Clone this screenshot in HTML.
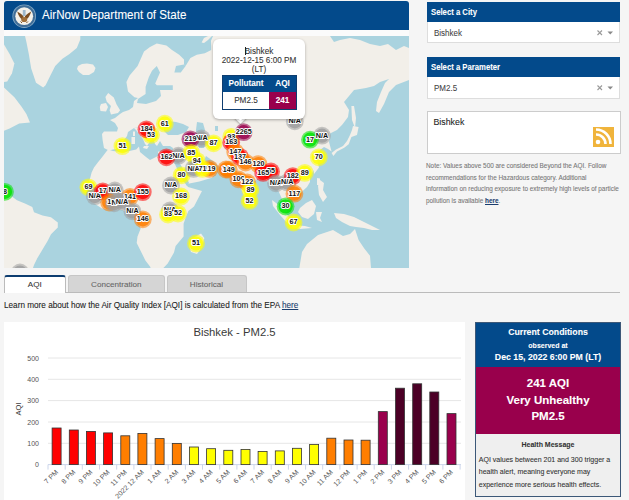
<!DOCTYPE html>
<html><head><meta charset="utf-8">
<style>
*{box-sizing:border-box;margin:0;padding:0}
html,body{width:629px;height:500px;overflow:hidden;background:#f5f5f5;font-family:"Liberation Sans",sans-serif;position:relative}
.abs{position:absolute}
.t{position:absolute;white-space:nowrap;line-height:1;-webkit-text-stroke:0.08px currentColor}
#hdr{left:4px;top:1px;width:405px;height:29px;background:#034a8b;border-radius:3px 3px 0 0}
.ph{background:#034a8b;color:#fff;font-weight:bold}
.sel{background:#fff;border:1px solid #ddd;border-top:none}
.ml{font:bold 7.2px "Liberation Sans",sans-serif;fill:#111;stroke:#fff;stroke-width:2px;paint-order:stroke;stroke-linejoin:round}
.yl{font:7px "Liberation Sans",sans-serif;fill:#555}
.xl{font:7px "Liberation Sans",sans-serif;fill:#555}
.at{font:7.6px "Liberation Sans",sans-serif;fill:#333}
.ct{font:11.3px "Liberation Sans",sans-serif;fill:#3a3a3a}
</style></head><body>
<div id="hdr" class="abs"></div>
<div class="abs" style="left:4px;top:29.5px;width:405px;height:6.5px;background:#fbfbfb"></div>
<svg class="abs" style="left:12px;top:3.5px" width="25" height="25" viewBox="0 0 25 25">
<circle cx="12.2" cy="12.2" r="11.8" fill="#7fa6c4"/>
<circle cx="12.2" cy="12.2" r="10.9" fill="#3f6d97"/>
<circle cx="12.2" cy="12.2" r="8.9" fill="#f4f1ea"/>
<path d="M11,16 Q7,14 5.2,7.5 Q8.5,9 11.5,12Z" fill="#7a4e22"/>
<path d="M13.4,16 Q17.4,14 19.2,7.5 Q15.9,9 12.9,12Z" fill="#7a4e22"/>
<rect x="10.8" y="6" width="2.8" height="6" fill="#9fb9cc"/>
<ellipse cx="12.2" cy="15.5" rx="3" ry="2.6" fill="#a0703a"/>
<path d="M8.5,17.5 L10,19 M15.9,17.5 L14.4,19" stroke="#7a4e22" stroke-width="1"/>
</svg>
<div class="t" style="left:42px;top:8.7px;font-size:12.3px;color:#fff;transform:scaleX(0.943);transform-origin:0 0">AirNow Department of State</div>
<svg class="abs" style="left:4px;top:36px" width="405" height="232" viewBox="4 36 405 232"><rect x="4" y="36" width="405" height="232" fill="#aad3df"/><path d="M25.0,36.0 L80.3,36.0 L80.3,39.6 L76.8,48.0 L69.5,54.0 L62.4,58.8 L55.2,66.0 L50.4,75.6 L45.6,85.2 L43.2,87.6 L36.0,82.8 L31.2,68.4 L28.8,54.0 L26.4,42.0Z" fill="#f2efe9" /><path d="M78.0,66.0 L82.0,64.0 L87.0,63.5 L93.0,64.5 L95.5,68.0 L94.0,72.0 L89.0,75.0 L83.0,75.0 L79.0,72.0 L77.0,69.0Z" fill="#f2efe9" /><path d="M4.0,44.4 L9.6,54.0 L14.4,63.6 L12.0,73.2 L7.2,81.6 L4.0,82.0Z" fill="#f2efe9" /><path d="M4.0,87.6 L14.4,97.2 L21.6,106.8 L26.4,114.0 L30.0,122.4 L19.2,123.6 L9.6,128.4 L4.0,130.8Z" fill="#f2efe9" /><path d="M4.0,193.0 L10.2,195.2 L17.0,200.3 L25.5,203.7 L32.3,207.1 L34.0,212.2 L42.5,215.6 L51.0,217.3 L57.8,222.4 L57.8,227.5 L51.0,234.3 L47.6,241.1 L42.5,249.6 L37.4,258.1 L34.0,265.0 L32.3,270.0 L4.0,270.0Z" fill="#f2efe9" /><path d="M108.2,93.0 L113.8,97.6 L116.6,104.6 L120.1,110.2 L118.0,113.0 L111.0,114.4 L109.6,110.2 L111.0,106.0 L106.8,101.8 L105.4,97.0Z" fill="#f2efe9" /><path d="M101.0,104.0 L106.0,103.0 L108.0,107.0 L106.0,111.6 L100.5,111.0 L99.8,107.0Z" fill="#f2efe9" /><path d="M109.0,150.5 L104.0,148.0 L102.6,140.0 L102.0,134.0 L104.0,131.5 L117.0,131.5 L118.0,128.0 L115.0,123.0 L110.0,120.0 L115.0,118.0 L120.0,114.0 L123.0,112.0 L129.0,110.0 L133.0,107.0 L134.0,101.0 L138.0,98.0 L134.4,97.2 L128.0,91.6 L126.4,82.0 L129.6,75.6 L137.6,66.0 L144.0,51.6 L150.0,47.0 L156.8,43.6 L166.4,45.5 L172.0,50.0 L179.2,54.8 L184.0,59.6 L184.0,64.4 L185.6,66.0 L190.4,58.0 L196.8,54.8 L204.8,53.2 L211.2,50.0 L211.0,40.7 L213.0,36.0 L330.0,36.0 L334.0,42.0 L340.0,40.0 L350.0,38.0 L360.0,40.0 L370.0,44.0 L380.0,46.0 L388.0,44.0 L396.0,50.0 L404.0,46.0 L409.0,48.0 L409.0,80.0 L396.0,85.0 L389.0,92.0 L384.0,104.0 L379.0,113.0 L376.0,111.0 L377.0,102.0 L381.0,92.0 L385.0,83.0 L389.0,79.0 L386.0,80.0 L380.0,82.0 L374.0,86.0 L366.0,88.0 L354.0,90.0 L344.0,102.0 L349.0,110.0 L348.0,117.0 L342.4,124.4 L337.0,130.0 L330.0,133.4 L329.0,142.0 L331.6,151.4 L328.0,149.0 L324.0,147.0 L320.0,150.0 L316.0,155.0 L319.0,167.6 L314.0,174.0 L313.5,170.0 L310.0,177.0 L310.0,182.0 L307.0,187.0 L300.0,193.5 L292.0,198.0 L288.0,201.0 L287.0,212.0 L283.0,212.0 L282.0,199.0 L278.0,190.0 L272.0,186.0 L266.0,180.0 L258.0,178.0 L252.0,184.0 L249.0,196.0 L247.0,205.0 L244.0,196.0 L240.0,186.0 L233.0,177.0 L226.0,173.0 L221.0,168.0 L217.0,165.0 L215.5,163.4 L217.3,170.6 L212.0,177.8 L199.4,181.4 L186.8,184.0 L183.0,178.0 L177.0,166.0 L172.0,154.0 L173.0,148.0 L170.0,146.0 L163.0,146.0 L160.0,141.0 L157.0,146.0 L155.0,144.0 L153.0,138.0 L147.0,131.0 L141.0,127.0 L134.0,128.0 L128.0,132.0 L127.0,136.0 L124.0,140.0 L121.0,146.0 L116.0,149.0 L113.0,149.5Z" fill="#f2efe9" /><path d="M141.0,127.0 L145.0,131.0 L149.0,135.0 L153.0,139.0 L151.0,140.0 L149.0,143.0 L147.0,146.0 L145.0,144.0 L143.0,139.0 L139.0,134.0 L136.0,130.0 L134.0,128.0Z" fill="#f2efe9" /><path d="M144.0,146.0 L149.0,146.0 L147.0,149.0 L143.0,148.0Z" fill="#f2efe9" /><path d="M131.5,137.0 L135.0,137.0 L135.0,144.0 L131.5,144.0Z" fill="#f2efe9" /><path d="M133.0,131.5 L135.0,131.5 L135.0,136.0 L133.0,136.0Z" fill="#f2efe9" /><path d="M158.0,151.5 L164.0,151.5 L164.0,153.5 L158.0,153.5Z" fill="#f2efe9" /><path d="M108.0,149.5 L113.0,151.0 L123.6,152.2 L136.2,149.4 L139.0,146.6 L140.0,152.0 L146.0,157.0 L150.0,160.0 L158.0,156.0 L170.0,154.0 L172.0,153.0 L176.0,165.0 L183.0,180.0 L188.0,187.0 L202.0,191.0 L194.0,206.5 L188.4,211.0 L185.5,218.0 L183.6,223.8 L183.6,236.6 L175.6,246.0 L174.0,252.5 L167.7,263.6 L163.0,268.4 L161.0,272.0 L152.0,272.0 L150.2,266.8 L145.4,260.4 L140.7,251.0 L136.7,243.0 L137.5,236.6 L140.7,228.6 L138.0,222.0 L134.0,216.4 L122.8,210.0 L102.0,208.4 L92.0,202.0 L88.0,190.4 L89.2,180.8 L90.4,177.2 L91.6,172.4 L94.0,167.6 L97.6,162.8 L102.4,156.8 L106.0,152.0Z" fill="#f2efe9" /><path d="M201.0,233.4 L204.3,238.0 L202.0,247.0 L197.0,254.0 L191.0,252.0 L189.0,245.0 L193.0,238.0Z" fill="#f2efe9" /><path d="M299.0,270.0 L302.0,252.0 L307.0,244.0 L318.0,235.0 L333.0,230.0 L343.0,236.0 L350.0,234.0 L355.0,229.0 L358.6,240.0 L364.3,248.6 L370.0,255.7 L371.0,268.0 L371.0,270.0Z" fill="#f2efe9" /><path d="M334.0,213.0 L344.0,214.0 L354.0,217.0 L364.0,222.0 L372.0,226.0 L380.0,230.0 L372.0,230.0 L364.0,228.0 L356.0,227.0 L350.0,226.0 L342.0,222.0 L336.0,218.0Z" fill="#f2efe9" /><path d="M300.0,208.0 L306.0,203.0 L312.0,200.0 L316.0,206.0 L314.0,214.0 L308.0,219.0 L302.0,217.0 L298.0,212.0Z" fill="#f2efe9" /><path d="M272.0,200.0 L280.0,206.0 L288.0,216.0 L292.0,222.0 L288.0,224.0 L280.0,215.0 L273.0,206.0Z" fill="#f2efe9" /><path d="M292.0,225.0 L305.0,226.0 L312.0,228.0 L300.0,229.0 L292.0,227.0Z" fill="#f2efe9" /><path d="M316.0,212.0 L322.0,212.0 L320.0,218.0 L322.0,222.0 L317.0,220.0Z" fill="#f2efe9" /><path d="M320.0,180.0 L324.0,183.0 L323.0,190.0 L327.0,197.0 L323.0,202.0 L319.0,195.0 L318.0,186.0Z" fill="#f2efe9" /><path d="M353.0,126.0 L358.6,127.0 L357.0,135.0 L351.4,137.0 L348.7,144.2 L344.2,147.8 L337.0,151.4 L333.4,156.0 L331.6,153.0 L336.0,149.5 L343.0,146.0 L347.0,141.0 L350.0,135.0 L352.0,130.0Z" fill="#f2efe9" /><path d="M351.4,106.0 L354.0,106.0 L356.0,118.0 L355.0,128.0 L352.0,120.0Z" fill="#f2efe9" /><path d="M317.0,178.0 L320.0,178.5 L320.0,185.0 L317.0,185.0Z" fill="#f2efe9" /><path d="M252.0,200.0 L255.0,202.0 L254.0,207.0 L251.0,205.0Z" fill="#f2efe9" /><path d="M201.6,42.4 L204.0,38.0 L208.0,36.0 L212.0,36.0 L208.0,40.0 L204.0,43.0Z" fill="#f2efe9" /><path d="M137.0,103.0 L146.0,104.0 L156.0,101.0 L161.0,96.0 L160.0,90.0 L172.8,90.0 L172.8,85.2 L156.8,85.2 L155.2,83.6 L160.0,72.4 L156.8,66.0 L152.0,70.8 L148.8,77.2 L145.6,86.8 L145.6,94.0 L141.0,97.0 L138.0,99.0Z" fill="#aad3df" /><path d="M176.0,66.0 L184.0,64.4 L185.6,66.0 L180.8,72.4 L174.4,72.4Z" fill="#aad3df" /><path d="M163.0,124.0 L168.0,121.0 L176.0,122.0 L183.0,124.0 L189.0,127.0 L186.0,132.0 L178.0,135.0 L168.0,135.0 L164.0,131.0Z" fill="#aad3df" /><path d="M197.0,122.0 L203.0,123.0 L205.0,130.0 L203.0,136.0 L206.0,142.0 L204.0,148.0 L199.0,148.0 L197.0,141.0 L196.0,130.0Z" fill="#aad3df" /><path d="M172.0,154.0 L175.0,155.0 L183.0,169.0 L189.0,183.0 L187.0,186.0 L181.0,177.0 L173.0,160.0Z" fill="#aad3df" /><path d="M206.0,156.0 L213.0,161.0 L218.0,166.0 L215.0,168.0 L209.0,165.0 L204.0,160.0Z" fill="#aad3df" /><path d="M215.0,126.0 L218.0,126.0 L218.0,131.0 L215.0,131.0Z" fill="#aad3df" /><circle cx="5" cy="191.8" r="8.9" fill="#00e400" fill-opacity="0.55"/><circle cx="5" cy="191.8" r="7.1" fill="#00e400" fill-opacity="0.8"/><circle cx="20" cy="272.5" r="8.9" fill="#9e9e9e" fill-opacity="0.55"/><circle cx="20" cy="272.5" r="7.1" fill="#9e9e9e" fill-opacity="0.8"/><circle cx="122.4" cy="146.1" r="8.9" fill="#ffff00" fill-opacity="0.55"/><circle cx="122.4" cy="146.1" r="7.1" fill="#ffff00" fill-opacity="0.8"/><circle cx="151" cy="134.9" r="8.9" fill="#ffff00" fill-opacity="0.55"/><circle cx="151" cy="134.9" r="7.1" fill="#ffff00" fill-opacity="0.8"/><circle cx="146.4" cy="129.3" r="8.9" fill="#ff0000" fill-opacity="0.55"/><circle cx="146.4" cy="129.3" r="7.1" fill="#ff0000" fill-opacity="0.8"/><circle cx="164.8" cy="123.7" r="8.9" fill="#ffff00" fill-opacity="0.55"/><circle cx="164.8" cy="123.7" r="7.1" fill="#ffff00" fill-opacity="0.8"/><circle cx="88.4" cy="187.3" r="8.9" fill="#ffff00" fill-opacity="0.55"/><circle cx="88.4" cy="187.3" r="7.1" fill="#ffff00" fill-opacity="0.8"/><circle cx="94.8" cy="196.1" r="8.9" fill="#9e9e9e" fill-opacity="0.55"/><circle cx="94.8" cy="196.1" r="7.1" fill="#9e9e9e" fill-opacity="0.8"/><circle cx="102.8" cy="191.3" r="8.9" fill="#ff0000" fill-opacity="0.55"/><circle cx="102.8" cy="191.3" r="7.1" fill="#ff0000" fill-opacity="0.8"/><circle cx="114.8" cy="190.5" r="8.9" fill="#9e9e9e" fill-opacity="0.55"/><circle cx="114.8" cy="190.5" r="7.1" fill="#9e9e9e" fill-opacity="0.8"/><circle cx="109.2" cy="202.5" r="8.9" fill="#ff7e00" fill-opacity="0.55"/><circle cx="109.2" cy="202.5" r="7.1" fill="#ff7e00" fill-opacity="0.8"/><circle cx="114" cy="203.3" r="8.9" fill="#9e9e9e" fill-opacity="0.55"/><circle cx="114" cy="203.3" r="7.1" fill="#9e9e9e" fill-opacity="0.8"/><circle cx="130" cy="196.9" r="8.9" fill="#ff7e00" fill-opacity="0.55"/><circle cx="130" cy="196.9" r="7.1" fill="#ff7e00" fill-opacity="0.8"/><circle cx="122" cy="201.7" r="8.9" fill="#9e9e9e" fill-opacity="0.55"/><circle cx="122" cy="201.7" r="7.1" fill="#9e9e9e" fill-opacity="0.8"/><circle cx="142.8" cy="192.1" r="8.9" fill="#ff0000" fill-opacity="0.55"/><circle cx="142.8" cy="192.1" r="7.1" fill="#ff0000" fill-opacity="0.8"/><circle cx="132.4" cy="211.3" r="8.9" fill="#9e9e9e" fill-opacity="0.55"/><circle cx="132.4" cy="211.3" r="7.1" fill="#9e9e9e" fill-opacity="0.8"/><circle cx="142.8" cy="219.3" r="8.9" fill="#ff7e00" fill-opacity="0.55"/><circle cx="142.8" cy="219.3" r="7.1" fill="#ff7e00" fill-opacity="0.8"/><circle cx="201.6" cy="138.5" r="8.9" fill="#9e9e9e" fill-opacity="0.55"/><circle cx="201.6" cy="138.5" r="7.1" fill="#9e9e9e" fill-opacity="0.8"/><circle cx="190.4" cy="139.3" r="8.9" fill="#99004c" fill-opacity="0.55"/><circle cx="190.4" cy="139.3" r="7.1" fill="#99004c" fill-opacity="0.8"/><circle cx="213.6" cy="143.3" r="8.9" fill="#ffff00" fill-opacity="0.55"/><circle cx="213.6" cy="143.3" r="7.1" fill="#ffff00" fill-opacity="0.8"/><circle cx="178.4" cy="155.7" r="8.9" fill="#9e9e9e" fill-opacity="0.55"/><circle cx="178.4" cy="155.7" r="7.1" fill="#9e9e9e" fill-opacity="0.8"/><circle cx="166.4" cy="157.3" r="8.9" fill="#ff0000" fill-opacity="0.55"/><circle cx="166.4" cy="157.3" r="7.1" fill="#ff0000" fill-opacity="0.8"/><circle cx="191.2" cy="152.9" r="8.9" fill="#ffff00" fill-opacity="0.55"/><circle cx="191.2" cy="152.9" r="7.1" fill="#ffff00" fill-opacity="0.8"/><circle cx="196.8" cy="160.9" r="8.9" fill="#ffff00" fill-opacity="0.55"/><circle cx="196.8" cy="160.9" r="7.1" fill="#ffff00" fill-opacity="0.8"/><circle cx="181.6" cy="175.3" r="8.9" fill="#ffff00" fill-opacity="0.55"/><circle cx="181.6" cy="175.3" r="7.1" fill="#ffff00" fill-opacity="0.8"/><circle cx="171" cy="185.5" r="8.9" fill="#9e9e9e" fill-opacity="0.55"/><circle cx="171" cy="185.5" r="7.1" fill="#9e9e9e" fill-opacity="0.8"/><circle cx="181" cy="196.5" r="8.9" fill="#ffff00" fill-opacity="0.55"/><circle cx="181" cy="196.5" r="7.1" fill="#ffff00" fill-opacity="0.8"/><circle cx="170" cy="210.5" r="8.9" fill="#9e9e9e" fill-opacity="0.55"/><circle cx="170" cy="210.5" r="7.1" fill="#9e9e9e" fill-opacity="0.8"/><circle cx="178" cy="213.5" r="8.9" fill="#ffff00" fill-opacity="0.55"/><circle cx="178" cy="213.5" r="7.1" fill="#ffff00" fill-opacity="0.8"/><circle cx="168" cy="214.5" r="8.9" fill="#ffff00" fill-opacity="0.55"/><circle cx="168" cy="214.5" r="7.1" fill="#ffff00" fill-opacity="0.8"/><circle cx="196" cy="243.5" r="8.9" fill="#ffff00" fill-opacity="0.55"/><circle cx="196" cy="243.5" r="7.1" fill="#ffff00" fill-opacity="0.8"/><circle cx="193.6" cy="168.9" r="8.9" fill="#9e9e9e" fill-opacity="0.55"/><circle cx="193.6" cy="168.9" r="7.1" fill="#9e9e9e" fill-opacity="0.8"/><circle cx="209.6" cy="168.9" r="8.9" fill="#ff7e00" fill-opacity="0.55"/><circle cx="209.6" cy="168.9" r="7.1" fill="#ff7e00" fill-opacity="0.8"/><circle cx="202.4" cy="168.9" r="8.9" fill="#ffff00" fill-opacity="0.55"/><circle cx="202.4" cy="168.9" r="7.1" fill="#ffff00" fill-opacity="0.8"/><circle cx="226" cy="169.5" r="8.9" fill="#ff7e00" fill-opacity="0.55"/><circle cx="226" cy="169.5" r="7.1" fill="#ff7e00" fill-opacity="0.8"/><circle cx="231.2" cy="136.9" r="8.9" fill="#ffff00" fill-opacity="0.55"/><circle cx="231.2" cy="136.9" r="7.1" fill="#ffff00" fill-opacity="0.8"/><circle cx="231.2" cy="142.5" r="8.9" fill="#ff0000" fill-opacity="0.55"/><circle cx="231.2" cy="142.5" r="7.1" fill="#ff0000" fill-opacity="0.8"/><circle cx="243.7" cy="132.2" r="8.9" fill="#99004c" fill-opacity="0.55"/><circle cx="243.7" cy="132.2" r="7.1" fill="#99004c" fill-opacity="0.8"/><circle cx="235.2" cy="152.1" r="8.9" fill="#ff7e00" fill-opacity="0.55"/><circle cx="235.2" cy="152.1" r="7.1" fill="#ff7e00" fill-opacity="0.8"/><circle cx="240" cy="156.9" r="8.9" fill="#ff0000" fill-opacity="0.55"/><circle cx="240" cy="156.9" r="7.1" fill="#ff0000" fill-opacity="0.8"/><circle cx="245.6" cy="162.5" r="8.9" fill="#ff7e00" fill-opacity="0.55"/><circle cx="245.6" cy="162.5" r="7.1" fill="#ff7e00" fill-opacity="0.8"/><circle cx="228.8" cy="169.7" r="8.9" fill="#ff7e00" fill-opacity="0.55"/><circle cx="228.8" cy="169.7" r="7.1" fill="#ff7e00" fill-opacity="0.8"/><circle cx="258.4" cy="164.1" r="8.9" fill="#ff7e00" fill-opacity="0.55"/><circle cx="258.4" cy="164.1" r="7.1" fill="#ff7e00" fill-opacity="0.8"/><circle cx="271" cy="171.5" r="8.9" fill="#ff0000" fill-opacity="0.55"/><circle cx="271" cy="171.5" r="7.1" fill="#ff0000" fill-opacity="0.8"/><circle cx="263.2" cy="172.9" r="8.9" fill="#ff0000" fill-opacity="0.55"/><circle cx="263.2" cy="172.9" r="7.1" fill="#ff0000" fill-opacity="0.8"/><circle cx="238.4" cy="179.3" r="8.9" fill="#ff7e00" fill-opacity="0.55"/><circle cx="238.4" cy="179.3" r="7.1" fill="#ff7e00" fill-opacity="0.8"/><circle cx="247.2" cy="182.5" r="8.9" fill="#ff7e00" fill-opacity="0.55"/><circle cx="247.2" cy="182.5" r="7.1" fill="#ff7e00" fill-opacity="0.8"/><circle cx="250.4" cy="189.7" r="8.9" fill="#ffff00" fill-opacity="0.55"/><circle cx="250.4" cy="189.7" r="7.1" fill="#ffff00" fill-opacity="0.8"/><circle cx="249.6" cy="200.9" r="8.9" fill="#ffff00" fill-opacity="0.55"/><circle cx="249.6" cy="200.9" r="7.1" fill="#ffff00" fill-opacity="0.8"/><circle cx="276" cy="183.3" r="8.9" fill="#9e9e9e" fill-opacity="0.55"/><circle cx="276" cy="183.3" r="7.1" fill="#9e9e9e" fill-opacity="0.8"/><circle cx="287.2" cy="182.5" r="8.9" fill="#9e9e9e" fill-opacity="0.55"/><circle cx="287.2" cy="182.5" r="7.1" fill="#9e9e9e" fill-opacity="0.8"/><circle cx="292.8" cy="176.1" r="8.9" fill="#ff0000" fill-opacity="0.55"/><circle cx="292.8" cy="176.1" r="7.1" fill="#ff0000" fill-opacity="0.8"/><circle cx="304.8" cy="172.9" r="8.9" fill="#ffff00" fill-opacity="0.55"/><circle cx="304.8" cy="172.9" r="7.1" fill="#ffff00" fill-opacity="0.8"/><circle cx="294.4" cy="193.7" r="8.9" fill="#ff7e00" fill-opacity="0.55"/><circle cx="294.4" cy="193.7" r="7.1" fill="#ff7e00" fill-opacity="0.8"/><circle cx="285.6" cy="206.5" r="8.9" fill="#00e400" fill-opacity="0.55"/><circle cx="285.6" cy="206.5" r="7.1" fill="#00e400" fill-opacity="0.8"/><circle cx="293.6" cy="222.5" r="8.9" fill="#ffff00" fill-opacity="0.55"/><circle cx="293.6" cy="222.5" r="7.1" fill="#ffff00" fill-opacity="0.8"/><circle cx="294.8" cy="121.3" r="8.9" fill="#9e9e9e" fill-opacity="0.55"/><circle cx="294.8" cy="121.3" r="7.1" fill="#9e9e9e" fill-opacity="0.8"/><circle cx="322" cy="135.7" r="8.9" fill="#9e9e9e" fill-opacity="0.55"/><circle cx="322" cy="135.7" r="7.1" fill="#9e9e9e" fill-opacity="0.8"/><circle cx="310" cy="139.7" r="8.9" fill="#00e400" fill-opacity="0.55"/><circle cx="310" cy="139.7" r="7.1" fill="#00e400" fill-opacity="0.8"/><circle cx="318.8" cy="157.3" r="8.9" fill="#ffff00" fill-opacity="0.55"/><circle cx="318.8" cy="157.3" r="7.1" fill="#ffff00" fill-opacity="0.8"/><text x="5" y="193.70000000000002" text-anchor="middle" class="ml">8</text><text x="122.4" y="148.0" text-anchor="middle" class="ml">51</text><text x="151" y="136.8" text-anchor="middle" class="ml">53</text><text x="146.4" y="131.20000000000002" text-anchor="middle" class="ml">184</text><text x="164.8" y="125.60000000000001" text-anchor="middle" class="ml">61</text><text x="88.4" y="189.20000000000002" text-anchor="middle" class="ml">69</text><text x="94.8" y="198.0" text-anchor="middle" class="ml">N/A</text><text x="102.8" y="193.20000000000002" text-anchor="middle" class="ml">17</text><text x="114.8" y="192.4" text-anchor="middle" class="ml">N/A</text><text x="109.2" y="204.4" text-anchor="middle" class="ml">1</text><text x="114" y="205.20000000000002" text-anchor="middle" class="ml">N</text><text x="130" y="198.8" text-anchor="middle" class="ml">141</text><text x="122" y="203.6" text-anchor="middle" class="ml">N/A</text><text x="142.8" y="194.0" text-anchor="middle" class="ml">155</text><text x="132.4" y="213.20000000000002" text-anchor="middle" class="ml">N/A</text><text x="142.8" y="221.20000000000002" text-anchor="middle" class="ml">146</text><text x="201.6" y="140.4" text-anchor="middle" class="ml">N/A</text><text x="190.4" y="141.20000000000002" text-anchor="middle" class="ml">219</text><text x="213.6" y="145.20000000000002" text-anchor="middle" class="ml">87</text><text x="178.4" y="157.6" text-anchor="middle" class="ml">N/A</text><text x="166.4" y="159.20000000000002" text-anchor="middle" class="ml">162</text><text x="191.2" y="154.8" text-anchor="middle" class="ml">85</text><text x="196.8" y="162.8" text-anchor="middle" class="ml">94</text><text x="181.6" y="177.20000000000002" text-anchor="middle" class="ml">80</text><text x="171" y="187.4" text-anchor="middle" class="ml">N/A</text><text x="181" y="198.4" text-anchor="middle" class="ml">168</text><text x="170" y="212.4" text-anchor="middle" class="ml">N/A</text><text x="178" y="215.4" text-anchor="middle" class="ml">52</text><text x="168" y="216.4" text-anchor="middle" class="ml">83</text><text x="196" y="245.4" text-anchor="middle" class="ml">51</text><text x="193.6" y="170.8" text-anchor="middle" class="ml">N/A</text><text x="209.6" y="170.8" text-anchor="middle" class="ml">119</text><text x="202.4" y="170.8" text-anchor="middle" class="ml">71</text><text x="226" y="171.4" text-anchor="middle" class="ml">14</text><text x="231.2" y="138.8" text-anchor="middle" class="ml">93</text><text x="231.2" y="144.4" text-anchor="middle" class="ml">163</text><text x="243.7" y="134.1" text-anchor="middle" class="ml">2265</text><text x="235.2" y="154.0" text-anchor="middle" class="ml">147</text><text x="240" y="158.8" text-anchor="middle" class="ml">137</text><text x="245.6" y="164.4" text-anchor="middle" class="ml">146</text><text x="228.8" y="171.6" text-anchor="middle" class="ml">149</text><text x="258.4" y="166.0" text-anchor="middle" class="ml">120</text><text x="271" y="173.4" text-anchor="middle" class="ml">55</text><text x="263.2" y="174.8" text-anchor="middle" class="ml">165</text><text x="238.4" y="181.20000000000002" text-anchor="middle" class="ml">106</text><text x="247.2" y="184.4" text-anchor="middle" class="ml">122</text><text x="250.4" y="191.6" text-anchor="middle" class="ml">89</text><text x="249.6" y="202.8" text-anchor="middle" class="ml">52</text><text x="276" y="185.20000000000002" text-anchor="middle" class="ml">N/A</text><text x="287.2" y="184.4" text-anchor="middle" class="ml">N/A</text><text x="292.8" y="178.0" text-anchor="middle" class="ml">182</text><text x="304.8" y="174.8" text-anchor="middle" class="ml">89</text><text x="294.4" y="195.6" text-anchor="middle" class="ml">117</text><text x="285.6" y="208.4" text-anchor="middle" class="ml">30</text><text x="293.6" y="224.4" text-anchor="middle" class="ml">67</text><text x="294.8" y="123.2" text-anchor="middle" class="ml">N/A</text><text x="322" y="137.6" text-anchor="middle" class="ml">N/A</text><text x="310" y="141.6" text-anchor="middle" class="ml">17</text><text x="318.8" y="159.20000000000002" text-anchor="middle" class="ml">70</text></svg>
<div class="abs" style="left:235.5px;top:113.1px;width:9px;height:9px;background:#fff;transform:rotate(45deg);box-shadow:1px 1px 2px rgba(0,0,0,.25)"></div>
<div class="abs" style="left:213px;top:39px;width:92px;height:80px;background:#fff;border-radius:6px;box-shadow:0 1px 3px rgba(0,0,0,.3)"></div>
<div class="abs" style="left:235.5px;top:110px;width:9px;height:9px;background:#fff;transform:rotate(45deg)"></div>
<div class="t" style="left:213px;top:46.5px;width:92px;text-align:center;font-size:8.2px;line-height:9.4px;color:#333">Bishkek<br>2022-12-15 6:00 PM<br>(LT)</div>
<div class="abs" style="left:244.6px;top:46.5px;width:0.9px;height:8px;background:#222"></div>
<div class="abs" style="left:221.5px;top:75px;width:75px;height:35px;border:1px solid #0d3d70;background:#fff"></div>
<div class="abs" style="left:222.5px;top:76px;width:73px;height:16px;background:#034a8b"></div>
<div class="abs" style="left:269px;top:92px;width:26.5px;height:17px;background:#99004c"></div>
<div class="t" style="left:222.5px;top:80px;width:47px;text-align:center;font-size:8.2px;font-weight:bold;color:#fff">Pollutant</div>
<div class="t" style="left:269px;top:80px;width:27px;text-align:center;font-size:8.2px;font-weight:bold;color:#fff">AQI</div>
<div class="t" style="left:222.5px;top:96.5px;width:47px;text-align:center;font-size:8.2px;color:#333">PM2.5</div>
<div class="t" style="left:269px;top:96.5px;width:27px;text-align:center;font-size:8.2px;font-weight:bold;color:#fff">241</div>

<div class="abs ph" style="left:427px;top:2px;width:193px;height:20px"></div>
<div class="t" style="left:430.7px;top:7.6px;font-size:8.9px;font-weight:bold;color:#fff;transform:scaleX(0.87);transform-origin:0 0">Select a City</div>
<div class="abs sel" style="left:427px;top:22px;width:193px;height:21px"></div>
<div class="t" style="left:433.5px;top:29.2px;font-size:8.6px;color:#444;transform:scaleX(0.93);transform-origin:0 0">Bishkek</div>
<div class="abs ph" style="left:427px;top:57px;width:193px;height:20px"></div>
<div class="t" style="left:430.7px;top:62.6px;font-size:8.9px;font-weight:bold;color:#fff;transform:scaleX(0.87);transform-origin:0 0">Select a Parameter</div>
<div class="abs sel" style="left:427px;top:77px;width:193px;height:22px"></div>
<div class="t" style="left:433.5px;top:84.2px;font-size:8.6px;color:#444;transform:scaleX(0.93);transform-origin:0 0">PM2.5</div>
<svg class="abs" style="left:596px;top:29px" width="20" height="8" viewBox="0 0 20 8"><path d="M1.5,1.5 L6,6 M6,1.5 L1.5,6" stroke="#999" stroke-width="1.1"/><path d="M11.5,2.5 L17,2.5 L14.25,5.5Z" fill="#888"/></svg>
<svg class="abs" style="left:596px;top:84px" width="20" height="8" viewBox="0 0 20 8"><path d="M1.5,1.5 L6,6 M6,1.5 L1.5,6" stroke="#999" stroke-width="1.1"/><path d="M11.5,2.5 L17,2.5 L14.25,5.5Z" fill="#888"/></svg>
<div class="abs" style="left:426.5px;top:111px;width:194.5px;height:42.6px;background:#fff;border:1px solid #ccc"></div>
<div class="t" style="left:433.5px;top:117.6px;font-size:8.8px;color:#222">Bishkek</div>
<svg class="abs" style="left:593px;top:126.5px" width="21" height="20" viewBox="0 0 21 20">
<rect width="21" height="20" fill="#f0b43c"/>
<circle cx="5" cy="15" r="2.3" fill="#fff"/>
<path d="M3,7.5 A9.5,9.5 0 0 1 12.5,17" stroke="#fff" stroke-width="2.6" fill="none"/>
<path d="M3,2.5 A14.5,14.5 0 0 1 17.5,17" stroke="#fff" stroke-width="2.6" fill="none"/>
</svg>
<div class="t" style="left:426px;top:160px;width:200px;white-space:normal;font-size:6.4px;line-height:11.5px;color:#777">Note: Values above 500 are considered Beyond the AQI. Follow<br>recommendations for the Hazardous category. Additional<br>information on reducing exposure to extremely high levels of particle<br>pollution is available <b style="color:#1a3d6e;text-decoration:underline">here</b>.</div>

<div class="abs" style="left:4px;top:291.5px;width:616px;height:1px;background:#bbb"></div>
<div class="abs" style="left:4px;top:275px;width:61.5px;height:17.5px;background:#fff;border:1px solid #bbb;border-top:2px solid #0d3d70;border-bottom:none;border-radius:3px 3px 0 0"></div>
<div class="t" style="left:4px;top:280.5px;width:61.5px;text-align:center;font-size:8.1px;color:#333">AQI</div>
<div class="abs" style="left:68px;top:275px;width:96.5px;height:16.5px;background:#d5d5d5;border:1px solid #c6c6c6;border-bottom:none;border-radius:3px 3px 0 0"></div>
<div class="t" style="left:68px;top:280.5px;width:96.5px;text-align:center;font-size:8.1px;color:#666">Concentration</div>
<div class="abs" style="left:166.5px;top:275px;width:80px;height:16.5px;background:#d5d5d5;border:1px solid #c6c6c6;border-bottom:none;border-radius:3px 3px 0 0"></div>
<div class="t" style="left:166.5px;top:280.5px;width:80px;text-align:center;font-size:8.1px;color:#666">Historical</div>
<div class="t" style="left:4px;top:301.5px;font-size:8.2px;color:#222">Learn more about how the Air Quality Index [AQI] is calculated from the EPA <span style="color:#1a3d6e;text-decoration:underline">here</span></div>

<div class="abs" style="left:4px;top:322px;width:460.5px;height:178px;background:#fff"></div>
<svg class="abs" style="left:0;top:0" width="629" height="500" viewBox="0 0 629 500"><line x1="48" y1="358" x2="461" y2="358" stroke="#e6e6e6" stroke-width="1"/><text x="39" y="360.5" text-anchor="end" class="yl">500</text><line x1="48" y1="379.3" x2="461" y2="379.3" stroke="#e6e6e6" stroke-width="1"/><text x="39" y="381.8" text-anchor="end" class="yl">400</text><line x1="48" y1="400.6" x2="461" y2="400.6" stroke="#e6e6e6" stroke-width="1"/><text x="39" y="403.1" text-anchor="end" class="yl">300</text><line x1="48" y1="422" x2="461" y2="422" stroke="#e6e6e6" stroke-width="1"/><text x="39" y="424.5" text-anchor="end" class="yl">200</text><line x1="48" y1="443.3" x2="461" y2="443.3" stroke="#e6e6e6" stroke-width="1"/><text x="39" y="445.8" text-anchor="end" class="yl">100</text><text x="39" y="467.1" text-anchor="end" class="yl">0</text><line x1="48" y1="464.6" x2="461" y2="464.6" stroke="#ccd6eb" stroke-width="1"/><line x1="48.0" y1="464.6" x2="48.0" y2="469.6" stroke="#ccd6eb" stroke-width="1"/><line x1="65.2" y1="464.6" x2="65.2" y2="469.6" stroke="#ccd6eb" stroke-width="1"/><line x1="82.3" y1="464.6" x2="82.3" y2="469.6" stroke="#ccd6eb" stroke-width="1"/><line x1="99.5" y1="464.6" x2="99.5" y2="469.6" stroke="#ccd6eb" stroke-width="1"/><line x1="116.7" y1="464.6" x2="116.7" y2="469.6" stroke="#ccd6eb" stroke-width="1"/><line x1="133.9" y1="464.6" x2="133.9" y2="469.6" stroke="#ccd6eb" stroke-width="1"/><line x1="151.0" y1="464.6" x2="151.0" y2="469.6" stroke="#ccd6eb" stroke-width="1"/><line x1="168.2" y1="464.6" x2="168.2" y2="469.6" stroke="#ccd6eb" stroke-width="1"/><line x1="185.4" y1="464.6" x2="185.4" y2="469.6" stroke="#ccd6eb" stroke-width="1"/><line x1="202.5" y1="464.6" x2="202.5" y2="469.6" stroke="#ccd6eb" stroke-width="1"/><line x1="219.7" y1="464.6" x2="219.7" y2="469.6" stroke="#ccd6eb" stroke-width="1"/><line x1="236.9" y1="464.6" x2="236.9" y2="469.6" stroke="#ccd6eb" stroke-width="1"/><line x1="254.0" y1="464.6" x2="254.0" y2="469.6" stroke="#ccd6eb" stroke-width="1"/><line x1="271.2" y1="464.6" x2="271.2" y2="469.6" stroke="#ccd6eb" stroke-width="1"/><line x1="288.4" y1="464.6" x2="288.4" y2="469.6" stroke="#ccd6eb" stroke-width="1"/><line x1="305.6" y1="464.6" x2="305.6" y2="469.6" stroke="#ccd6eb" stroke-width="1"/><line x1="322.7" y1="464.6" x2="322.7" y2="469.6" stroke="#ccd6eb" stroke-width="1"/><line x1="339.9" y1="464.6" x2="339.9" y2="469.6" stroke="#ccd6eb" stroke-width="1"/><line x1="357.1" y1="464.6" x2="357.1" y2="469.6" stroke="#ccd6eb" stroke-width="1"/><line x1="374.2" y1="464.6" x2="374.2" y2="469.6" stroke="#ccd6eb" stroke-width="1"/><line x1="391.4" y1="464.6" x2="391.4" y2="469.6" stroke="#ccd6eb" stroke-width="1"/><line x1="408.6" y1="464.6" x2="408.6" y2="469.6" stroke="#ccd6eb" stroke-width="1"/><line x1="425.7" y1="464.6" x2="425.7" y2="469.6" stroke="#ccd6eb" stroke-width="1"/><line x1="442.9" y1="464.6" x2="442.9" y2="469.6" stroke="#ccd6eb" stroke-width="1"/><line x1="460.1" y1="464.6" x2="460.1" y2="469.6" stroke="#ccd6eb" stroke-width="1"/><rect x="52.1" y="428.0" width="9" height="36.6" fill="#ff0000" stroke="#333" stroke-width="0.8"/><text transform="translate(58.6,472.6) rotate(-45)" text-anchor="end" class="xl">7 PM</text><rect x="69.3" y="430.0" width="9" height="34.6" fill="#ff0000" stroke="#333" stroke-width="0.8"/><text transform="translate(75.8,472.6) rotate(-45)" text-anchor="end" class="xl">8 PM</text><rect x="86.4" y="431.4" width="9" height="33.2" fill="#ff0000" stroke="#333" stroke-width="0.8"/><text transform="translate(92.9,472.6) rotate(-45)" text-anchor="end" class="xl">9 PM</text><rect x="103.6" y="432.9" width="9" height="31.7" fill="#ff0000" stroke="#333" stroke-width="0.8"/><text transform="translate(110.1,472.6) rotate(-45)" text-anchor="end" class="xl">10 PM</text><rect x="120.8" y="435.8" width="9" height="28.8" fill="#ff7e00" stroke="#333" stroke-width="0.8"/><text transform="translate(127.3,472.6) rotate(-45)" text-anchor="end" class="xl">11 PM</text><rect x="137.9" y="433.4" width="9" height="31.2" fill="#ff7e00" stroke="#333" stroke-width="0.8"/><text transform="translate(144.4,472.6) rotate(-45)" text-anchor="end" class="xl">2022 12 AM</text><rect x="155.1" y="438.6" width="9" height="26.0" fill="#ff7e00" stroke="#333" stroke-width="0.8"/><text transform="translate(161.6,472.6) rotate(-45)" text-anchor="end" class="xl">1 AM</text><rect x="172.3" y="443.4" width="9" height="21.2" fill="#ff7e00" stroke="#333" stroke-width="0.8"/><text transform="translate(178.8,472.6) rotate(-45)" text-anchor="end" class="xl">2 AM</text><rect x="189.4" y="447.0" width="9" height="17.6" fill="#ffff00" stroke="#333" stroke-width="0.8"/><text transform="translate(195.9,472.6) rotate(-45)" text-anchor="end" class="xl">3 AM</text><rect x="206.6" y="448.7" width="9" height="15.9" fill="#ffff00" stroke="#333" stroke-width="0.8"/><text transform="translate(213.1,472.6) rotate(-45)" text-anchor="end" class="xl">4 AM</text><rect x="223.8" y="450.3" width="9" height="14.3" fill="#ffff00" stroke="#333" stroke-width="0.8"/><text transform="translate(230.3,472.6) rotate(-45)" text-anchor="end" class="xl">5 AM</text><rect x="241.0" y="449.4" width="9" height="15.2" fill="#ffff00" stroke="#333" stroke-width="0.8"/><text transform="translate(247.5,472.6) rotate(-45)" text-anchor="end" class="xl">6 AM</text><rect x="258.1" y="451.4" width="9" height="13.2" fill="#ffff00" stroke="#333" stroke-width="0.8"/><text transform="translate(264.6,472.6) rotate(-45)" text-anchor="end" class="xl">7 AM</text><rect x="275.3" y="450.9" width="9" height="13.7" fill="#ffff00" stroke="#333" stroke-width="0.8"/><text transform="translate(281.8,472.6) rotate(-45)" text-anchor="end" class="xl">8 AM</text><rect x="292.5" y="448.3" width="9" height="16.3" fill="#ffff00" stroke="#333" stroke-width="0.8"/><text transform="translate(299.0,472.6) rotate(-45)" text-anchor="end" class="xl">9 AM</text><rect x="309.6" y="444.5" width="9" height="20.1" fill="#ffff00" stroke="#333" stroke-width="0.8"/><text transform="translate(316.1,472.6) rotate(-45)" text-anchor="end" class="xl">10 AM</text><rect x="326.8" y="438.2" width="9" height="26.4" fill="#ff7e00" stroke="#333" stroke-width="0.8"/><text transform="translate(333.3,472.6) rotate(-45)" text-anchor="end" class="xl">11 AM</text><rect x="344.0" y="440.0" width="9" height="24.6" fill="#ff7e00" stroke="#333" stroke-width="0.8"/><text transform="translate(350.5,472.6) rotate(-45)" text-anchor="end" class="xl">12 PM</text><rect x="361.1" y="440.2" width="9" height="24.4" fill="#ff7e00" stroke="#333" stroke-width="0.8"/><text transform="translate(367.6,472.6) rotate(-45)" text-anchor="end" class="xl">1 PM</text><rect x="378.3" y="411.6" width="9" height="53.0" fill="#99004c" stroke="#333" stroke-width="0.8"/><text transform="translate(384.8,472.6) rotate(-45)" text-anchor="end" class="xl">2 PM</text><rect x="395.5" y="388.2" width="9" height="76.4" fill="#4c0026" stroke="#333" stroke-width="0.8"/><text transform="translate(402.0,472.6) rotate(-45)" text-anchor="end" class="xl">3 PM</text><rect x="412.7" y="383.8" width="9" height="80.8" fill="#4c0026" stroke="#333" stroke-width="0.8"/><text transform="translate(419.2,472.6) rotate(-45)" text-anchor="end" class="xl">4 PM</text><rect x="429.8" y="392.0" width="9" height="72.6" fill="#4c0026" stroke="#333" stroke-width="0.8"/><text transform="translate(436.3,472.6) rotate(-45)" text-anchor="end" class="xl">5 PM</text><rect x="447.0" y="413.6" width="9" height="51.0" fill="#99004c" stroke="#333" stroke-width="0.8"/><text transform="translate(453.5,472.6) rotate(-45)" text-anchor="end" class="xl">6 PM</text><text transform="translate(21,409) rotate(-90)" text-anchor="middle" class="at">AQI</text><text x="234.5" y="336.4" text-anchor="middle" class="ct">Bishkek - PM2.5</text></svg>

<div class="abs" style="left:475px;top:321.5px;width:146px;height:175px;border:1px solid #3c5878;background:#efefef"></div>
<div class="abs" style="left:476px;top:322.5px;width:144px;height:44px;background:#034a8b"></div>
<div class="abs" style="left:476px;top:366.5px;width:144px;height:67px;background:#99004c"></div>
<div class="t" style="left:476px;top:327.7px;width:144px;text-align:center;font-size:8.75px;font-weight:bold;color:#fff">Current Conditions</div>
<div class="t" style="left:476px;top:341.5px;width:144px;text-align:center;font-size:7px;font-weight:bold;color:#fff">observed at</div>
<div class="t" style="left:476px;top:352.8px;width:144px;text-align:center;font-size:8.75px;font-weight:bold;color:#fff">Dec 15, 2022 6:00 PM (LT)</div>
<div class="t" style="left:476px;top:375px;width:144px;text-align:center;font-size:11.5px;line-height:16.6px;font-weight:bold;color:#fff">241 AQI<br>Very Unhealthy<br>PM2.5</div>
<div class="t" style="left:476px;top:441px;width:144px;text-align:center;font-size:7px;font-weight:bold;color:#333">Health Message</div>
<div class="t" style="left:478.8px;top:454.2px;width:141px;font-size:7.02px;line-height:12.3px;color:#333">AQI values between 201 and 300 trigger a<br>health alert, meaning everyone may<br>experience more serious health effects.</div>
</body></html>
